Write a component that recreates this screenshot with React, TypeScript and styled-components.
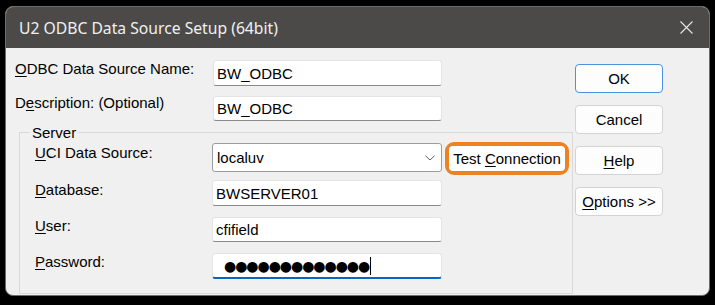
import React from 'react';
import styled, { createGlobalStyle } from 'styled-components';

const GlobalStyle = createGlobalStyle`
  html, body {
    margin: 0;
    padding: 0;
    background: #000;
  }
  body {
    font-family: 'Liberation Sans', Arial, sans-serif;
    color: #000;
  }
`;

const Screen = styled.div`
  width: 715px;
  height: 305px;
  box-sizing: border-box;
  padding: 6px 0 0 5px;
  background: #000;
`;

const Window = styled.div`
  width: 705px;
  height: 290px;
  box-sizing: border-box;
  border: 1px solid #6c6c6c;
  border-radius: 8px;
  overflow: hidden;
  background: #f0f0f0;
  display: flex;
  flex-direction: column;
`;

const TitleBar = styled.div`
  height: 41px;
  flex: none;
  background: #4b4a48;
  display: flex;
  align-items: center;
  justify-content: space-between;
  padding: 0 16px 0 13px;
`;

const Title = styled.span`
  font-family: 'Noto Sans', 'Open Sans', sans-serif;
  font-size: 15.7px;
  color: #f0f0f0;
`;

const CloseIcon = styled.svg`
  width: 13px;
  height: 13px;
  margin-top: -1px;
`;

const Body = styled.div`
  flex: 1;
  display: flex;
  align-items: flex-start;
`;

const FormColumn = styled.div`
  width: 567px;
  box-sizing: border-box;
  padding: 12px 0 0 9px;
`;

const Row = styled.div<{ $top: number; $labelWidth: number }>`
  display: grid;
  grid-template-columns: ${p => p.$labelWidth}px auto auto;
  justify-content: start;
  align-items: start;
  margin-top: ${p => p.$top}px;
`;

const Label = styled.label<{ $offset?: number }>`
  font-size: 15px;
  line-height: 18px;
  margin-top: ${p => p.$offset ?? 0}px;
  white-space: nowrap;

  u {
    text-decoration: underline;
    text-underline-offset: 2px;
  }
`;

const TextBox = styled.div<{ $h?: number; $w?: number }>`
  width: ${p => p.$w ?? 229}px;
  height: ${p => p.$h ?? 26}px;
  box-sizing: border-box;
  background: #fff;
  border: 1px solid #e4e4e4;
  border-bottom-color: #8a8a8a;
  border-radius: 3px;
  padding: 0 4px 0 3px;
  display: flex;
  align-items: center;
  font-size: 15px;
  white-space: nowrap;
`;

const PasswordBox = styled(TextBox)`
  border-bottom: 2px solid #0a64c4;
  padding-left: 11px;
  padding-top: 1px;
`;

const Dots = styled.span`
  font-family: 'DejaVu Sans', sans-serif;
  font-size: 14px;
  letter-spacing: -1.05px;
  color: #000;
`;

const Caret = styled.span`
  width: 1px;
  height: 18px;
  margin-left: 1px;
  background: #000;
`;

const Combo = styled.div`
  width: 230px;
  height: 29px;
  margin-top: 1px;
  box-sizing: border-box;
  background: #fff;
  border: 1px solid #9c9c9c;
  border-radius: 3px;
  padding: 0 6px 0 4px;
  display: flex;
  align-items: center;
  justify-content: space-between;
  font-size: 15px;
`;

const GroupBox = styled.div`
  width: 554px;
  height: 162px;
  box-sizing: border-box;
  margin: 11px 0 0 4px;
  border: 1px solid #d9d9d9;
  padding: 0 0 0 15px;
`;

const Legend = styled.div`
  width: fit-content;
  margin: -9px 0 0 -5px;
  padding: 0 2px;
  background: #f0f0f0;
  font-size: 15px;
  line-height: 18px;
`;

const Highlight = styled.div`
  width: 124px;
  height: 33px;
  margin-left: 3px;
  box-sizing: border-box;
  border: 4px solid #ee8120;
  border-radius: 9px;
  background: #fff;
  display: flex;
`;

const ButtonColumn = styled.div`
  width: 88px;
  margin-left: 2px;
  padding-top: 16px;
  display: flex;
  flex-direction: column;
  gap: 12px;
`;

const Button = styled.button<{ $default?: boolean; $bare?: boolean }>`
  width: ${p => (p.$bare ? '100%' : '88px')};
  height: ${p => (p.$bare ? '100%' : '29px')};
  box-sizing: border-box;
  margin: 0;
  padding: 0;
  background: ${p => (p.$bare ? '#fff' : '#fdfdfd')};
  border: ${p => (p.$bare ? 'none' : `1px solid ${p.$default ? '#4b93dd' : '#d3d3d3'}`)};
  border-radius: 4px;
  font-family: 'Liberation Sans', Arial, sans-serif;
  font-size: 15px;
  color: #000;
  display: flex;
  align-items: center;
  justify-content: center;
  white-space: pre;

  u {
    text-decoration: underline;
    text-underline-offset: 2px;
  }
`;

export default function App() {
  return (
    <>
      <GlobalStyle />
      <Screen>
        <Window>
          <TitleBar>
            <Title>U2 ODBC Data Source Setup (64bit)</Title>
            <CloseIcon viewBox="0 0 13 13">
              <path d="M0.5 0.5 L12.5 12.5 M12.5 0.5 L0.5 12.5" stroke="#e6e6e6" strokeWidth="1.1" fill="none" />
            </CloseIcon>
          </TitleBar>
          <Body>
            <FormColumn>
              <Row $top={0} $labelWidth={198}>
                <Label><u>O</u>DBC Data Source Name:</Label>
                <TextBox>BW_ODBC</TextBox>
              </Row>
              <Row $top={10} $labelWidth={198}>
                <Label $offset={-2}>D<u>e</u>scription: (Optional)</Label>
                <TextBox $h={25}>BW_ODBC</TextBox>
              </Row>
              <GroupBox>
                <Legend>Server</Legend>
                <Row $top={0} $labelWidth={177}>
                  <Label $offset={2}><u>U</u>CI Data Source:</Label>
                  <Combo>
                    <span>localuv</span>
                    <svg width="10" height="6" viewBox="0 0 10 6">
                      <path d="M0.5 0.8 L5 5 L9.5 0.8" stroke="#5f5f5f" strokeWidth="1" fill="none" />
                    </svg>
                  </Combo>
                  <Highlight>
                    <Button $bare><span>Test <u>C</u>onnection</span></Button>
                  </Highlight>
                </Row>
                <Row $top={5} $labelWidth={177}>
                  <Label $offset={1}><u>D</u>atabase:</Label>
                  <TextBox $w={230}>BWSERVER01</TextBox>
                </Row>
                <Row $top={11} $labelWidth={177}>
                  <Label><u>U</u>ser:</Label>
                  <TextBox $w={230} $h={25}>cfifield</TextBox>
                </Row>
                <Row $top={11} $labelWidth={177}>
                  <Label><u>P</u>assword:</Label>
                  <PasswordBox $w={230} $h={26}>
                    <Dots>●●●●●●●●●●●●●</Dots>
                    <Caret />
                  </PasswordBox>
                </Row>
              </GroupBox>
            </FormColumn>
            <ButtonColumn>
              <Button $default>OK</Button>
              <Button>Cancel</Button>
              <Button><span><u>H</u>elp</span></Button>
              <Button><span><u>O</u>ptions &gt;&gt;</span></Button>
            </ButtonColumn>
          </Body>
        </Window>
      </Screen>
    </>
  );
}
